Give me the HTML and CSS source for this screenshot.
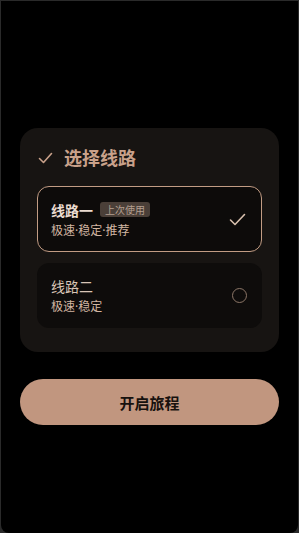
FILE: index.html
```html
<!DOCTYPE html>
<html lang="zh-CN">
<head>
  <meta charset="UTF-8">
  <title>选择线路</title>
  <link rel="stylesheet" href="styles.css">
</head>
<body>
  <div class="screen">
    <div class="panel">
      <div class="panel-title">
        <svg class="title-check" width="15" height="12" viewBox="0 0 15 12"><path d="M1.5 6.5 L5.5 10.5 L13.5 1.5" fill="none" stroke="#c9a18a" stroke-width="1.6" stroke-linecap="round" stroke-linejoin="round"/></svg>
        <span>选择线路</span>
      </div>

      <div class="route route-active">
        <div class="route-info">
          <div class="route-name">线路一 <span class="badge">上次使用</span></div>
          <div class="route-desc">极速·稳定·推荐</div>
        </div>
        <svg class="route-check" width="17" height="13" viewBox="0 0 17 13"><path d="M1.5 7 L6 11.5 L15.5 1.5" fill="none" stroke="#d8c0ae" stroke-width="1.6" stroke-linecap="round" stroke-linejoin="round"/></svg>
      </div>

      <div class="route">
        <div class="route-info">
          <div class="route-name normal">线路二</div>
          <div class="route-desc">极速·稳定</div>
        </div>
        <span class="radio"></span>
      </div>
    </div>

    <button class="start">开启旅程</button>
  </div>
</body>
</html>
```

FILE: styles.css
```css
body { margin: 0; background: #2a2a2a; font-family: "Noto Sans CJK SC", "Noto Sans", sans-serif; }
.screen { margin: 1px 1px 0; height: 532px; background: #000; border-radius: 0 0 8px 8px; padding: 127px 19px 0; box-sizing: border-box; }
.panel { background: #171412; border-radius: 18px; padding: 18px 17px 24px; }
.panel-title { display: flex; align-items: center; gap: 11px; padding-left: 1px; height: 22px; color: #c9a18a; font-size: 18px; font-weight: bold; margin-bottom: 18px; }
.title-check { margin-top: 1px; }
.route { display: flex; align-items: center; justify-content: space-between; height: 65px; box-sizing: border-box; padding: 0 14px; background: #0e0c0b; border-radius: 12px; }
.route + .route { margin-top: 11px; }
.route-active { height: 66px; border: 1.5px solid #c29c84; padding: 0 15px 0 13px; background: #0d0b0a; }
.route-info { display: flex; flex-direction: column; gap: 3px; }
.route-name { display: flex; align-items: center; gap: 7px; font-size: 14px; line-height: 20px; font-weight: bold; color: #eadbd0; }
.route-name.normal { font-weight: normal; color: #d9c5b6; }
.badge { font-size: 10px; line-height: 15px; font-weight: normal; padding: 0 5px; background: #4a3f38; color: #b49f90; border-radius: 3px; }
.route-desc { font-family: "Noto Sans", "Noto Sans CJK SC", sans-serif; font-size: 12px; line-height: 16px; color: #d2b6a2; }
.radio { width: 13px; height: 13px; border: 1.5px solid #8c7667; border-radius: 50%; margin-right: 1px; }
.start { display: block; width: 100%; margin-top: 27px; height: 46px; border: none; border-radius: 23px; background: #c1967f; color: #17110e; font-family: inherit; font-size: 15px; font-weight: bold; }
```
